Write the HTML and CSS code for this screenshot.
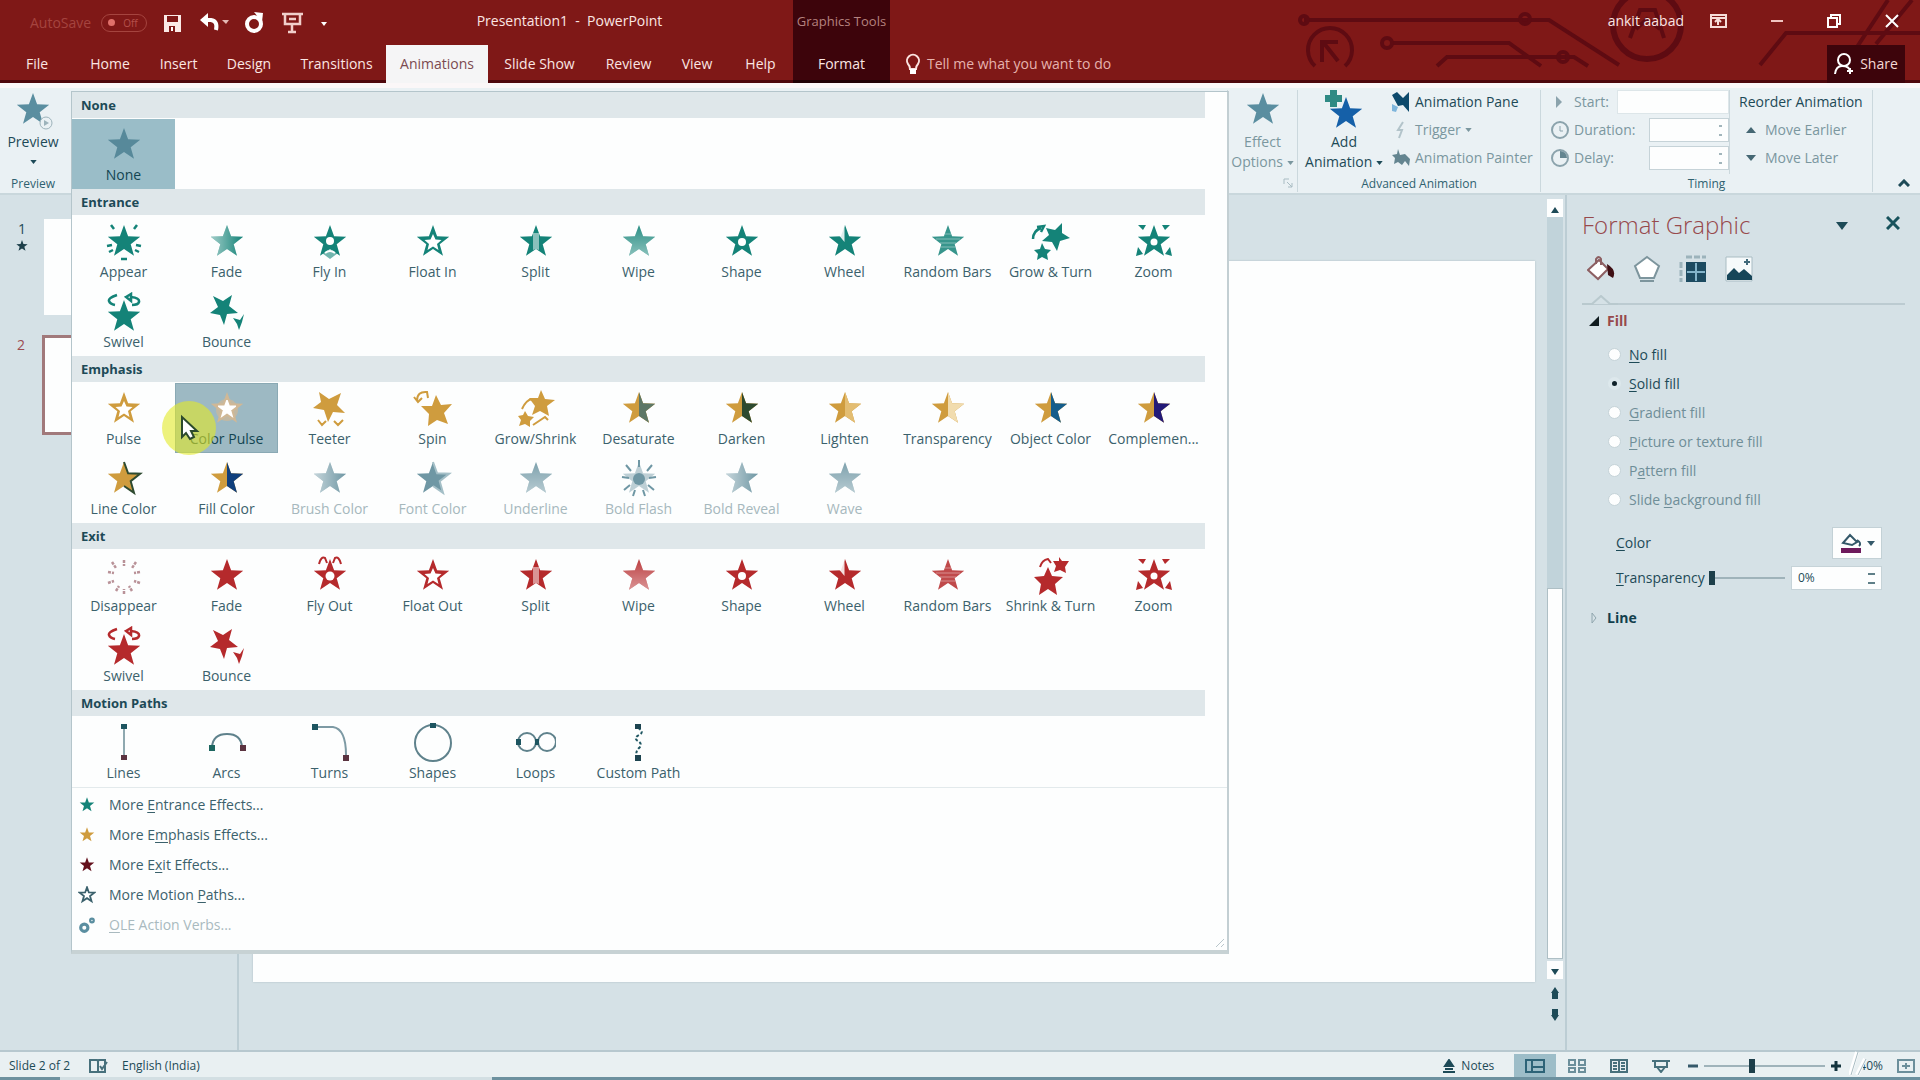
FILE: index.html
```html
<!DOCTYPE html>
<html lang="en">
<head>
<meta charset="utf-8">
<title>Presentation1 - PowerPoint</title>
<link rel="stylesheet" href="styles.css">
</head>
<body>
<svg class="defs" aria-hidden="true">
  <defs>
    <linearGradient id="fade-h"><stop offset="0" stop-color="#fff" stop-opacity=".6"/><stop offset="1" stop-color="#fff" stop-opacity="0"/></linearGradient>
    <linearGradient id="fade-v" x2="0" y2="1"><stop offset="0" stop-color="#fff" stop-opacity=".1"/><stop offset="1" stop-color="#fff" stop-opacity=".5"/></linearGradient>
    <path id="star" d="M20 3l4.100 11.300 12.100.400-9.500 7.500 3.300 11.600L20 27l-10 6.800 3.300-11.600-9.500-7.500 12.100-.400z"/>
    <path id="half" d="M20 3l4.100 11.300 12.100.400-9.500 7.500 3.300 11.600L20 27z"/>
    <symbol id="i-star" viewBox="0 0 40 40"><use href="#star" fill="currentColor"/></symbol>
    <symbol id="i-fade" viewBox="0 0 40 40"><use href="#star" fill="currentColor"/><use href="#star" fill="url(#fade-h)"/></symbol>
    <symbol id="i-wipe" viewBox="0 0 40 40"><use href="#star" fill="currentColor"/><use href="#star" fill="url(#fade-v)"/></symbol>
    <symbol id="i-half" viewBox="0 0 40 40"><use href="#star" fill="currentColor"/><use href="#half" class="half-fill"/></symbol>
    <symbol id="i-line" viewBox="0 0 40 40"><use href="#star" fill="currentColor"/><path d="M20 3l4.100 11.300 12.100.400-9.500 7.500 3.300 11.600L20 27" fill="none" class="half-line" stroke-width="2"/></symbol>
    <symbol id="i-hollow" viewBox="0 0 40 40"><use href="#star" fill="currentColor"/><path d="M20 12l2.500 5.500 6 .5-4.500 4 1.500 6L20 24.500 14.500 28l1.500-6-4.500-4 6-.5z" fill="#fff"/></symbol>
    <symbol id="i-shape" viewBox="0 0 40 40"><use href="#star" fill="currentColor"/><circle cx="20" cy="20" r="4" fill="#fff"/></symbol>
    <symbol id="i-flyin" viewBox="0 0 40 40"><use href="#star" fill="currentColor"/><circle cx="20" cy="19" r="4" fill="#fff"/><path d="M12 31q8-7 16 0l-8 6z" fill="currentColor" opacity=".6"/><path d="M15 31q5-4 10 0" stroke="#fff" stroke-width="2" fill="none"/></symbol>
    <symbol id="i-flyout" viewBox="0 0 40 40"><use href="#star" fill="currentColor"/><circle cx="20" cy="20" r="4.500" fill="#fff"/><path d="M9 8q2-8 6-6l2 5M31 8q-2-8-6-6l-2 5" stroke="currentColor" stroke-width="2" fill="none"/></symbol>
    <symbol id="i-split" viewBox="0 0 40 40"><use href="#star" fill="currentColor"/><path d="M17 11h6v17l-3-1-3 1z" fill="#fff" opacity=".5"/></symbol>
    <symbol id="i-wheel" viewBox="0 0 40 40"><use href="#star" fill="currentColor"/><path d="M19.500 3v17l-5-6 1-1z" fill="#fff" opacity=".85"/></symbol>
    <symbol id="i-bars" viewBox="0 0 40 40"><use href="#star" fill="currentColor" opacity=".85"/><path d="M8 17h24M12 21h16M13 25h14M17 12h6" stroke="#fff" stroke-width="1.500" opacity=".25"/></symbol>
    <symbol id="i-rays" viewBox="0 0 40 40"><use href="#star" fill="currentColor"/><path d="M7 3l3 4M33 3l-3 4M3 24l5-1M37 24l-5-1M5 30l4-2M35 30l-4-2M17 37h6" stroke="currentColor" stroke-width="2.500"/></symbol>
    <symbol id="i-burst" viewBox="0 0 40 40"><path d="M20 4v6M8 6l4 6M32 6l-4 6M4 16l6 1M36 16l-6 1M4 27l6-2M36 27l-6-2M12 35l3-5M28 35l-3-5M20 38v-5" stroke="currentColor" stroke-width="2.500" fill="none" stroke-dasharray="3 1"/></symbol>
    <symbol id="i-flash" viewBox="0 0 40 40"><use href="#star" fill="currentColor" opacity=".45"/><circle cx="20" cy="20" r="6" fill="currentColor"/><path d="M20 1v7M7 6l5 6M33 6l-5 6M3 18l7 1M37 18l-7 1M5 31l6-5M35 31l-6-5M14 37l2-6M26 37l-2-6" stroke="currentColor" stroke-width="2"/></symbol>
    <symbol id="i-swivel" viewBox="0 0 40 40"><use href="#star" fill="currentColor" y="5"/><path d="M13 3q-9 3-8 6 1 3 6 4M27 5q9 1 8 5-1 3-7 3M22 5l5-3v7z" stroke="currentColor" stroke-width="2.500" fill="none"/></symbol>
    <symbol id="i-bounce" viewBox="0 0 40 40"><path d="M6 4l10 5 9-6-3 11 9 7-11 1-3 11-4-10-10-2 8-6z" fill="currentColor"/><path d="M26 26l7 2 4-6-2 8-3 8-2-6z" fill="currentColor"/></symbol>
    <symbol id="i-grow" viewBox="0 0 40 40"><path d="M15 6l9 2 7-7 0 10 8 5-10 3-3 10-5-9-10-1 7-6z" fill="currentColor"/><path d="M11 21l3 6 6 1-4 4 1 6-6-3-5 3 1-6-4-4 6-1z" fill="currentColor"/><path d="M2 17q0-8 8-11M6 5l7-1-3 6" stroke="currentColor" stroke-width="2.500" fill="none"/></symbol>
    <symbol id="i-shrink" viewBox="0 0 40 40"><path d="M17 11l4 9 11 1-8 7 2 11-9-6-9 6 2-11-7-7 10-1z" fill="currentColor"/><path d="M28 1l3 4 7 0-4 6 1 6-6-3-6 2 2-6-3-5 6 0z" fill="currentColor"/><path d="M9 11q2-7 8-8l3 4" stroke="currentColor" stroke-width="2" fill="none"/></symbol>
    <symbol id="i-zoom" viewBox="0 0 40 40"><use href="#star" fill="currentColor"/><circle cx="20" cy="20" r="3.500" fill="#fff"/><path d="M4 3h8l-3 5zM36 3h-8l3 5zM2 34l2-9 5 7zM38 34l-2-9-5 7z" fill="currentColor"/></symbol>
    <symbol id="i-glow" viewBox="0 0 40 40"><use href="#star" fill="currentColor"/><circle cx="20" cy="21" r="11" fill="currentColor" opacity=".7"/><use href="#i-mini" x="11" y="11" width="18" height="18"/></symbol>
    <symbol id="i-mini" viewBox="0 0 40 40"><use href="#star" fill="#fff" stroke="#fff" stroke-width="5"/></symbol>
    <symbol id="i-teeter" viewBox="0 0 40 40"><path d="M9 3l10 7 12-6-4 12 8 8-12-1-5 10-4-12-11-2 8-6z" fill="currentColor"/><path d="M8 31l4 5 4-4M24 32l4 4 5-5" stroke="currentColor" stroke-width="2" fill="none"/></symbol>
    <symbol id="i-spin" viewBox="0 0 40 40"><path d="M23 6l5 10 11-1-8 9 4 11-11-4-9 6 1-12-8-8 11 0z" fill="currentColor"/><path d="M4 12q0-10 10-9l1 6M1 8l4 5 4-4" stroke="currentColor" stroke-width="2" fill="none"/></symbol>
    <symbol id="i-scale" viewBox="0 0 40 40"><path d="M25 1l4 9 10 1-8 6 2 10-9-5-8 4 3-9-6-8 9 0z" fill="currentColor"/><path d="M9 22l3 5 6 1-4 4 0 6-5-3-6 2 2-6-3-4 5-1z" fill="currentColor"/><path d="M6 20q4-9 10-10M17 36l12-8 3 3" fill="none" stroke="currentColor" stroke-width="2"/></symbol>
    <symbol id="i-lines" viewBox="0 0 40 40"><path d="M20 5v28" stroke="#8fa9b0" stroke-width="2"/><path d="M17 1h6v5h-6z" fill="#1d5560"/><path d="M17 32h6v5h-6z" fill="#5b3340"/></symbol>
    <symbol id="i-arcs" viewBox="0 0 40 40"><path d="M5 24q1-13 15-13t15 13" stroke="#5f828c" stroke-width="2" fill="none"/><path d="M2 22h6v6H2z" fill="#1d6660"/><path d="M33 22h6v6h-6z" fill="#5b3340"/></symbol>
    <symbol id="i-turns" viewBox="0 0 40 40"><path d="M5 4h18q13 2 13 28" stroke="#7d9aa4" stroke-width="2" fill="none"/><path d="M2 1h6v6H2z" fill="#1d5560"/><path d="M33 32h6v6h-6z" fill="#5b3340"/></symbol>
    <symbol id="i-shapes" viewBox="0 0 40 40"><circle cx="20" cy="20" r="18" stroke="#5f828c" stroke-width="2" fill="none"/><path d="M17 0h6v5h-6z" fill="#1d5560"/></symbol>
    <symbol id="i-loops" viewBox="0 0 40 40"><circle cx="11" cy="19" r="9" stroke="#5f828c" stroke-width="2" fill="none"/><circle cx="31" cy="19" r="9" stroke="#5f828c" stroke-width="2" fill="none"/><path d="M0 16h5v6H0zM19 16h4v6h-4z" fill="#1d5560"/></symbol>
    <symbol id="i-custom" viewBox="0 0 40 40"><path d="M19 5q7 4 1 7t-1 6 1 7-2 8" stroke="#1d5560" stroke-width="2" stroke-dasharray="3 2" fill="none"/><path d="M16 1h6v5h-6zM16 32h6v6h-6z" fill="#1d4450"/></symbol>
    <symbol id="i-outline" viewBox="0 0 40 40"><use href="#star" fill="#fff" stroke="currentColor" stroke-width="4"/></symbol>
    <symbol id="i-gears" viewBox="0 0 40 40"><circle cx="14" cy="26" r="8" stroke="currentColor" stroke-width="7" fill="none"/><circle cx="31" cy="10" r="4" stroke="currentColor" stroke-width="5" fill="none"/></symbol>
  </defs>
</svg>

<header class="app-header">
  <svg class="circuit" viewBox="0 0 640 83" width="640" height="83" aria-hidden="true">
    <g fill="none" stroke="#5e0b12" stroke-width="4">
      <path d="M24 20h245l70 45M111 43h118l32 23M157 66l10-9h127l14 9M480 65l26-32h134M575 50L608 0M596 44L632 0"/>
      <circle cx="24" cy="20" r="4"/><circle cx="245" cy="19" r="5"/><circle cx="107" cy="43" r="5"/><circle cx="283" cy="57" r="5"/>
      <path d="M35 66a22 22 0 1 1 30 0M42 62V42h16M43 42l15 19"/>
      <circle cx="367" cy="25" r="34" stroke-width="6"/><path d="M350 38l10-28h15l9 28M356 29l11-10 13 10"/>
    </g>
  </svg>
  <div class="title-row">
    <div class="quick">
      <span class="autosave">AutoSave</span>
      <button class="toggle" aria-label="AutoSave off"><i></i><span>Off</span></button>
      <button aria-label="Save"><svg width="22" height="22" viewBox="0 0 22 22"><path d="M2 3h17v17H2z" fill="#fbe9e6"/><path d="M5 4h11v6H5zM7 14h6v6H7z" fill="#7f1817"/><path d="M9 15h2v4H9z" fill="#fff"/></svg></button>
      <button aria-label="Undo"><svg width="30" height="22" viewBox="0 0 30 22"><path d="M3 8h9q7 1 5 10" fill="none" stroke="#fff" stroke-width="4"/><path d="M1 8l8-7v14z" fill="#fff"/><path d="M23 8h7l-3 4z" fill="#e3b9b4"/></svg></button>
      <button aria-label="Redo"><svg width="22" height="22" viewBox="0 0 22 22"><circle cx="10" cy="12" r="7" fill="none" stroke="#fff" stroke-width="4"/><path d="M10 0l9 1-1 9z" fill="#fff"/></svg></button>
      <button aria-label="Start from beginning"><svg width="24" height="22" viewBox="0 0 24 22"><path d="M1 2h21M4 3v9h15V3M11 12v7M7 20h8M8 7h7" stroke="#f1cfcb" stroke-width="2.500" fill="none"/></svg></button>
      <button aria-label="Customize quick access"><svg width="8" height="10" viewBox="0 0 8 10"><path d="M0 2h8M1 4h6L4 8z" fill="#fff"/></svg></button>
    </div>
    <div class="doc-title">Presentation1 &nbsp;-&nbsp; PowerPoint</div>
    <div class="context-title">Graphics Tools</div>
    <div class="window">
      <span>ankit aabad</span>
      <button aria-label="Ribbon display options"><svg width="18" height="16" viewBox="0 0 18 16"><path d="M1 2h15v12H1zM1 5h15M8 12V7M5 9l3-3 3 3" fill="none" stroke="#f6dcd9" stroke-width="2"/></svg></button>
      <button aria-label="Minimize"><svg width="14" height="16" viewBox="0 0 14 16"><path d="M1 8h12" stroke="#f0c4c0" stroke-width="2"/></svg></button>
      <button aria-label="Restore"><svg width="16" height="16" viewBox="0 0 16 16"><path d="M2 5h9v9H2zM5 4V2h9v9h-2" fill="none" stroke="#fff" stroke-width="2"/></svg></button>
      <button aria-label="Close"><svg width="16" height="16" viewBox="0 0 16 16"><path d="M2 2l12 12M14 2L2 14" stroke="#fff" stroke-width="2"/></svg></button>
    </div>
  </div>
  <nav class="tab-row">
    <a href="#file">File</a><a href="#home">Home</a><a href="#insert">Insert</a><a href="#design">Design</a><a href="#transitions">Transitions</a><a href="#animations" class="active">Animations</a><a href="#slideshow">Slide Show</a><a href="#review">Review</a><a href="#view">View</a><a href="#help">Help</a><a href="#format" class="context">Format</a>
    <button class="tell"><svg width="16" height="22" viewBox="0 0 16 22"><path d="M5 16q0-3-2-5a6 6 0 1 1 10 0q-2 2-2 5z" fill="none" stroke="#fbe3e0" stroke-width="2"/><path d="M5 16h6v5H5z" fill="#fff"/></svg>Tell me what you want to do</button>
    <button class="share"><svg width="20" height="24" viewBox="0 0 20 24"><circle cx="10" cy="8" r="6" fill="none" stroke="#fff" stroke-width="2"/><path d="M1 22q1-8 7-8 8 0 8 6M13 19h6M16 16v6" fill="none" stroke="#fff" stroke-width="2"/></svg>Share</button>
  </nav>
</header>

<section class="ribbon" aria-label="Animations ribbon">
  <div class="group preview">
    <button class="big"><svg class="icon steel" viewBox="0 0 40 40"><use href="#star" fill="currentColor"/><circle cx="33" cy="33" r="6" fill="#eaf1f4" stroke="#9db3bb" stroke-width="1"/><path d="M31 30l5 3-5 3z" fill="#9db3bb"/></svg>Preview<svg class="caret" viewBox="0 0 8 5"><path d="M0 0h8L4 5z"/></svg></button>
    <div class="group-name">Preview</div>
  </div>
  <div class="group gallery-slot"></div>
  <div class="group effect-options">
    <button class="big dim"><svg class="icon steel"><use href="#i-star"/></svg>Effect<span>Options <svg class="caret" viewBox="0 0 8 5"><path d="M0 0h8L4 5z"/></svg></span></button>
    <svg class="launcher" viewBox="0 0 10 10"><path d="M1 6V1h5M4 4l5 5M9 5v4H5" fill="none" stroke="#a9bcc3"/></svg>
  </div>
  <div class="group advanced">
    <div class="cols">
      <button class="big"><svg class="icon" viewBox="0 0 40 40"><use href="#star" fill="#1560a8" x="2" y="4"/><path d="M6 0h7v5h5v7h-5v5H6v-5H1V5h5z" fill="#2f8a84"/></svg>Add<span>Animation <svg class="caret" viewBox="0 0 8 5"><path d="M0 0h8L4 5z"/></svg></span></button>
      <div class="stack">
        <button><svg width="20" height="20" viewBox="0 0 20 20"><path d="M1 3l5-3 6 6 6-6v20l-6-7-5 1z" fill="#0d4a6c"/><path d="M1 12l6 3-2 5-4-1z" fill="#7fb6dc"/></svg>Animation Pane</button>
        <button class="dim"><svg width="20" height="20" viewBox="0 0 20 20"><path d="M12 2L7 10h4l-3 8" fill="none" stroke="#b3c4ca" stroke-width="2"/></svg>Trigger <svg class="caret" viewBox="0 0 8 5"><path d="M0 0h8L4 5z"/></svg></button>
        <button class="dim"><svg width="20" height="20" viewBox="0 0 20 20"><path d="M7 1l2 6 5-1 5 5-1 7-4-5-3 4-4-3-4 2 1-6-3-3 5-1z" fill="#648590"/></svg>Animation Painter</button>
      </div>
    </div>
    <div class="group-name">Advanced Animation</div>
  </div>
  <div class="group timing">
    <div class="cols">
      <div class="fields">
        <div class="field wide dim"><svg width="20" height="20" viewBox="0 0 20 20"><path d="M6 4l6 6-6 6z" fill="#8ba3ac"/></svg><label for="start">Start:</label><select id="start"><option></option></select></div>
        <div class="field dim"><svg width="20" height="20" viewBox="0 0 20 20"><circle cx="10" cy="10" r="8" fill="none" stroke="#8ba3ac" stroke-width="2"/><path d="M10 6v5h3" fill="none" stroke="#8ba3ac"/></svg><label for="duration">Duration:</label><span class="spin"><input id="duration" type="text"><i></i></span></div>
        <div class="field dim"><svg width="20" height="20" viewBox="0 0 20 20"><circle cx="10" cy="10" r="8" fill="none" stroke="#8ba3ac" stroke-width="2"/><path d="M10 3v7h7a7 7 0 0 0-7-7z" fill="#648590"/></svg><label for="delay">Delay:</label><span class="spin"><input id="delay" type="text"><i></i></span></div>
      </div>
      <div class="stack reorder">
        <div class="reorder-title">Reorder Animation</div>
        <button class="dim"><svg width="10" height="6" viewBox="0 0 10 6"><path d="M0 6h10L5 0z" fill="#456773"/></svg>Move Earlier</button>
        <button class="dim"><svg width="10" height="6" viewBox="0 0 10 6"><path d="M0 0h10L5 6z" fill="#456773"/></svg>Move Later</button>
      </div>
    </div>
    <div class="group-name">Timing</div>
  </div>
  <button class="collapse" aria-label="Collapse the ribbon"><svg width="12" height="8" viewBox="0 0 12 8"><path d="M1 7l5-5 5 5" fill="none" stroke="#1d4a57" stroke-width="3"/></svg></button>

  <div class="gallery">
    <h2>None</h2>
    <div class="effects">
      <button class="effect selected"><svg class="icon"><use href="#i-star"/></svg>None</button>
    </div>
    <h2>Entrance</h2>
    <div class="effects green">
      <button class="effect"><svg class="icon"><use href="#i-rays"/></svg>Appear</button>
      <button class="effect"><svg class="icon"><use href="#i-fade"/></svg>Fade</button>
      <button class="effect"><svg class="icon"><use href="#i-flyin"/></svg>Fly In</button>
      <button class="effect"><svg class="icon"><use href="#i-hollow"/></svg>Float In</button>
      <button class="effect"><svg class="icon"><use href="#i-split"/></svg>Split</button>
      <button class="effect"><svg class="icon"><use href="#i-wipe"/></svg>Wipe</button>
      <button class="effect"><svg class="icon"><use href="#i-shape"/></svg>Shape</button>
      <button class="effect"><svg class="icon"><use href="#i-wheel"/></svg>Wheel</button>
      <button class="effect"><svg class="icon"><use href="#i-bars"/></svg>Random Bars</button>
      <button class="effect"><svg class="icon"><use href="#i-grow"/></svg>Grow &amp; Turn</button>
      <button class="effect"><svg class="icon"><use href="#i-zoom"/></svg>Zoom</button>
      <button class="effect"><svg class="icon"><use href="#i-swivel"/></svg>Swivel</button>
      <button class="effect"><svg class="icon"><use href="#i-bounce"/></svg>Bounce</button>
    </div>
    <h2>Emphasis</h2>
    <div class="effects gold">
      <button class="effect"><svg class="icon"><use href="#i-hollow"/></svg>Pulse</button>
      <button class="effect hover"><svg class="icon"><use href="#i-glow"/></svg>Color Pulse
        <svg class="pointer" viewBox="0 0 56 56"><circle cx="28" cy="28" r="27" fill="#e2e926" fill-opacity=".6"/><path d="M21 17v20l4-4 4 6 4-2-3-6h6z" fill="#fff" stroke="#2c4a2c" stroke-width="2"/></svg></button>
      <button class="effect"><svg class="icon"><use href="#i-teeter"/></svg>Teeter</button>
      <button class="effect"><svg class="icon"><use href="#i-spin"/></svg>Spin</button>
      <button class="effect"><svg class="icon"><use href="#i-scale"/></svg>Grow/Shrink</button>
      <button class="effect"><svg class="icon to-gray"><use href="#i-half"/></svg>Desaturate</button>
      <button class="effect"><svg class="icon to-dark"><use href="#i-half"/></svg>Darken</button>
      <button class="effect"><svg class="icon to-light"><use href="#i-half"/></svg>Lighten</button>
      <button class="effect"><svg class="icon to-clear"><use href="#i-half"/></svg>Transparency</button>
      <button class="effect"><svg class="icon to-blue"><use href="#i-half"/></svg>Object Color</button>
      <button class="effect"><svg class="icon to-navy"><use href="#i-half"/></svg>Complemen...</button>
      <button class="effect"><svg class="icon to-dark"><use href="#i-line"/></svg>Line Color</button>
      <button class="effect"><svg class="icon to-deep"><use href="#i-half"/></svg>Fill Color</button>
      <button class="effect" disabled><svg class="icon"><use href="#i-fade"/></svg>Brush Color</button>
      <button class="effect" disabled><svg class="icon to-pale"><use href="#i-line"/></svg>Font Color</button>
      <button class="effect" disabled><svg class="icon"><use href="#i-wipe"/></svg>Underline</button>
      <button class="effect" disabled><svg class="icon"><use href="#i-flash"/></svg>Bold Flash</button>
      <button class="effect" disabled><svg class="icon"><use href="#i-fade"/></svg>Bold Reveal</button>
      <button class="effect" disabled><svg class="icon"><use href="#i-wipe"/></svg>Wave</button>
    </div>
    <h2>Exit</h2>
    <div class="effects red">
      <button class="effect"><svg class="icon burst"><use href="#i-burst"/></svg>Disappear</button>
      <button class="effect"><svg class="icon"><use href="#i-star"/></svg>Fade</button>
      <button class="effect"><svg class="icon"><use href="#i-flyout"/></svg>Fly Out</button>
      <button class="effect"><svg class="icon"><use href="#i-hollow"/></svg>Float Out</button>
      <button class="effect"><svg class="icon"><use href="#i-split"/></svg>Split</button>
      <button class="effect"><svg class="icon"><use href="#i-wipe"/></svg>Wipe</button>
      <button class="effect"><svg class="icon"><use href="#i-shape"/></svg>Shape</button>
      <button class="effect"><svg class="icon"><use href="#i-wheel"/></svg>Wheel</button>
      <button class="effect"><svg class="icon"><use href="#i-bars"/></svg>Random Bars</button>
      <button class="effect"><svg class="icon"><use href="#i-shrink"/></svg>Shrink &amp; Turn</button>
      <button class="effect"><svg class="icon"><use href="#i-zoom"/></svg>Zoom</button>
      <button class="effect"><svg class="icon"><use href="#i-swivel"/></svg>Swivel</button>
      <button class="effect"><svg class="icon"><use href="#i-bounce"/></svg>Bounce</button>
    </div>
    <h2>Motion Paths</h2>
    <div class="effects">
      <button class="effect"><svg class="icon"><use href="#i-lines"/></svg>Lines</button>
      <button class="effect"><svg class="icon"><use href="#i-arcs"/></svg>Arcs</button>
      <button class="effect"><svg class="icon"><use href="#i-turns"/></svg>Turns</button>
      <button class="effect"><svg class="icon"><use href="#i-shapes"/></svg>Shapes</button>
      <button class="effect"><svg class="icon"><use href="#i-loops"/></svg>Loops</button>
      <button class="effect"><svg class="icon"><use href="#i-custom"/></svg>Custom Path</button>
    </div>
    <div class="more">
      <button><svg class="green"><use href="#i-star"/></svg><span>More <u>E</u>ntrance Effects...</span></button>
      <button><svg class="gold"><use href="#i-star"/></svg><span>More E<u>m</u>phasis Effects...</span></button>
      <button><svg class="maroon"><use href="#i-star"/></svg><span>More E<u>x</u>it Effects...</span></button>
      <button><svg><use href="#i-outline"/></svg><span>More Motion <u>P</u>aths...</span></button>
      <button disabled><svg class="steel"><use href="#i-gears"/></svg><span><u>O</u>LE Action Verbs...</span></button>
    </div>
    <svg class="grip" viewBox="0 0 10 10"><path d="M1 9l8-8M6 9l3-3" stroke="#b9c6cb"/></svg>
  </div>
</section>

<main class="workspace">
  <aside class="thumbs">
    <div class="thumb"><div class="num">1<svg viewBox="0 0 40 40"><use href="#star"/></svg></div><div class="slide-mini"></div></div>
    <div class="thumb current"><div class="num">2</div><div class="slide-mini"></div></div>
  </aside>
  <section class="canvas"><div class="slide"></div></section>
  <div class="scroll">
    <button class="end" aria-label="Scroll up"><svg width="8" height="6" viewBox="0 0 8 6"><path d="M0 6h8L4 0z"/></svg></button>
    <div class="track"><div class="grab"></div></div>
    <button class="end down" aria-label="Scroll down"><svg width="8" height="6" viewBox="0 0 8 6"><path d="M0 0h8L4 6z"/></svg></button>
    <button aria-label="Previous slide"><svg width="8" height="12" viewBox="0 0 8 12"><path d="M0 6l4-6 4 6zM1 6h6v6H1z"/></svg></button>
    <button aria-label="Next slide"><svg width="8" height="12" viewBox="0 0 8 12"><path d="M1 0h6v6H1zM0 6h8l-4 6z"/></svg></button>
  </div>
  <aside class="pane">
    <div class="pane-head"><h1>Format Graphic</h1>
      <button aria-label="Pane options"><svg width="12" height="8" viewBox="0 0 12 8"><path d="M0 0h12L6 8z" fill="#1d4a57"/></svg></button>
      <button aria-label="Close pane"><svg width="14" height="14" viewBox="0 0 14 14"><path d="M1 1l12 12M13 1L1 13" stroke="#17525c" stroke-width="3"/></svg></button></div>
    <div class="pane-tabs">
      <button aria-label="Fill and line"><svg viewBox="0 0 28 28"><path d="M1 15L12 5l9 9-10 10z" fill="#fff" stroke="#8d5f62" stroke-width="2"/><path d="M9 9V4q3-4 5 0v6" fill="none" stroke="#8d5f62" stroke-width="2"/><path d="M20 9q10 6 6 14l-5-3z" fill="#3f0f14"/></svg></button>
      <button aria-label="Effects"><svg viewBox="0 0 28 28"><path d="M14 2l12 9-5 12H7L2 11z" fill="#fff" stroke="#7d959d" stroke-width="2"/><path d="M7 26h14" stroke="#7d959d" stroke-width="2"/></svg></button>
      <button aria-label="Size and properties"><svg viewBox="0 0 28 28"><path d="M7 7h20v20H7z" fill="#1c4a60"/><path d="M17 8v18M8 17h18" stroke="#83b3c9" stroke-width="2"/><path d="M7 2h20M2 7v20" stroke="#9cb3bb" stroke-width="3" stroke-dasharray="6 2"/></svg></button>
      <button aria-label="Picture"><svg viewBox="0 0 28 28"><path d="M1 2h26v24H1z" fill="#f6fafb" stroke="#a9bcc3"/><path d="M2 25v-5l7-7 5 5 5-4 8 7v4z" fill="#174659"/><path d="M22 4v6M19 7h6" stroke="#40697a" stroke-width="2"/></svg></button>
    </div>
    <svg class="notch" viewBox="0 0 36 10"><path d="M0 9h10l9-8 9 8h8" fill="#d5e1e6" stroke="#b9c9ce" stroke-width="2"/></svg>
    <h3 class="open"><svg width="12" height="12" viewBox="0 0 12 12"><path d="M11 1v10H1z" fill="#111c20"/></svg>Fill</h3>
    <div class="radios">
      <label><input type="radio" name="fill"><span><u>N</u>o fill</span></label>
      <label><input type="radio" name="fill" checked><span><u>S</u>olid fill</span></label>
      <label class="dim"><input type="radio" name="fill"><span><u>G</u>radient fill</span></label>
      <label class="dim"><input type="radio" name="fill"><span><u>P</u>icture or texture fill</span></label>
      <label class="dim"><input type="radio" name="fill"><span>P<u>a</u>ttern fill</span></label>
      <label class="dim"><input type="radio" name="fill"><span>Slide <u>b</u>ackground fill</span></label>
    </div>
    <div class="prop"><span><u>C</u>olor</span><button class="color" aria-label="Color"><svg width="38" height="24" viewBox="0 0 38 24"><path d="M5 12l7-8 7 7-5 3zM19 9q5 3 2 6" fill="#fff" stroke="#35596a" stroke-width="2"/><path d="M3 17h20v5H3z" fill="#6d1a5c"/><path d="M29 10h8l-4 5z" fill="#35596a"/></svg></button></div>
    <div class="prop"><label for="alpha"><u>T</u>ransparency</label><input id="alpha" type="range" min="0" max="100" value="0"><span class="spin"><input type="text" value="0%" aria-label="Transparency percent"><i></i></span></div>
    <h3><svg width="12" height="12" viewBox="0 0 12 12"><path d="M4 1l4 5-4 5z" fill="none" stroke="#90a6ae"/></svg>Line</h3>
  </aside>
</main>

<footer class="status">
  <span>Slide 2 of 2</span>
  <svg width="20" height="16" viewBox="0 0 20 16"><path d="M2 2h7l1 1 1-1h6v12H2zM10 3v11M12 8l2 3 5-7" fill="none" stroke="#47707c" stroke-width="2"/></svg>
  <span class="lang">English (India)</span>
  <button class="notes"><svg width="14" height="14" viewBox="0 0 14 14"><path d="M1 13h12M3 10h8M7 1l4 6H3z" fill="#1d4a57" stroke="#1d4a57" stroke-width="2"/></svg>Notes</button>
  <button class="view on" aria-label="Normal"><svg width="20" height="14" viewBox="0 0 20 14"><path d="M1 1h18v12H1zM7 1v12M7 8h12" fill="none" stroke="#2d6377" stroke-width="2"/></svg></button>
  <button class="view" aria-label="Slide sorter"><svg width="18" height="14" viewBox="0 0 18 14"><path d="M1 1h6v5H1zM11 1h6v5h-6zM1 9h6v4H1zM11 9h6v4h-6z" fill="none" stroke="#6c8f9b" stroke-width="2"/></svg></button>
  <button class="view" aria-label="Reading view"><svg width="18" height="14" viewBox="0 0 18 14"><path d="M1 1h16v12H1zM9 1v12M3 4h4M3 7h4M3 10h4M11 4h4M11 7h4M11 10h4" fill="none" stroke="#47707c" stroke-width="2"/></svg></button>
  <button class="view" aria-label="Slide show"><svg width="18" height="14" viewBox="0 0 18 14"><path d="M0 2h18M3 2v6h12V2M5 8l4 5 4-5" fill="none" stroke="#47707c" stroke-width="2"/></svg></button>
  <button class="step" aria-label="Zoom out"><svg width="10" height="10" viewBox="0 0 10 10"><path d="M0 5h10" stroke="#35596a" stroke-width="3"/></svg></button>
  <input type="range" class="zoom" min="0" max="100" value="39" aria-label="Zoom">
  <button class="step" aria-label="Zoom in"><svg width="10" height="10" viewBox="0 0 10 10"><path d="M0 5h10M5 0v10" stroke="#14343e" stroke-width="3"/></svg></button>
  <span class="percent"><svg class="mark" viewBox="0 0 20 26"><path d="M8 1L1 24M16 8L8 24" fill="none" stroke="#fff" stroke-width="4"/><path d="M9 1L2 24M17 8L9 24" fill="none" stroke="#a9bcc2" stroke-width="1"/></svg>40%</span>
  <button class="fit" aria-label="Fit slide to window"><svg width="18" height="14" viewBox="0 0 18 14"><path d="M1 1h16v12H1zM5 7h8M9 4v6" fill="none" stroke="#6c8f9b" stroke-width="2"/></svg></button>
</footer>
<div class="taskbar"></div>
</body>
</html>
```
FILE: styles.css
```css
* { box-sizing: border-box; }
body {
  margin: 0;
  min-height: 100vh;
  display: flex;
  flex-direction: column;
  background: #d5e1e6;
  color: #1d4a57;
  font: 14px/20px "Open Sans", "Noto Sans", sans-serif;
}
button { border: 0; background: none; padding: 0; margin: 0; font: inherit; color: inherit; }
a { color: inherit; text-decoration: none; }
h1, h2, h3 { margin: 0; }
u { text-underline-offset: 2px; }
.defs { position: absolute; width: 0; height: 0; }
.icon { width: 40px; height: 40px; display: block; flex: none; overflow: visible; }
.caret { width: 7px; height: 4px; fill: currentColor; vertical-align: middle; }
.dim { color: #7b979f; }
.steel { color: #5a8ea0; }
.green { color: #148378; }
.gold { color: #cf9c3e; }
.red { color: #b52a2c; }
.maroon { color: #64101c; }

/* header */
.app-header { position: relative; background: #7f1817; color: #fbe6e3; border-bottom: 3px solid #4e070c; }
.circuit { position: absolute; top: 0; right: 0; }
.title-row { position: relative; display: grid; grid-template-columns: 346px 447px 97px 1fr; height: 45px; align-items: stretch; }
.quick { display: flex; align-items: center; padding-left: 30px; gap: 15px; }
.quick svg { display: block; }
.autosave { color: #a5443f; margin-right: -5px; }
.toggle { display: flex; align-items: center; gap: 8px; width: 46px; height: 18px; border: 1px solid #a5443f; border-radius: 9px; padding-left: 6px; font-size: 10px; color: #b5504b; }
.toggle i { width: 7px; height: 7px; border-radius: 50%; background: #e0706a; }
.doc-title, .context-title { display: flex; align-items: center; justify-content: center; padding-bottom: 3px; }
.context-title { background: #3d040b; color: #b5827f; font-size: 13px; white-space: nowrap; }
.window { display: flex; align-items: center; justify-content: flex-end; gap: 42px; padding: 0 20px 3px; }
.window svg { display: block; }
.window span { margin-right: -16px; }
.tab-row { position: relative; display: grid; grid-template-columns: 74px 72px 65px 76px 99px 102px 103px 75px 62px 65px 97px 1fr 78px; height: 38px; margin-bottom: -3px; padding-right: 15px; }
.tab-row a { display: flex; align-items: center; justify-content: center; box-shadow: inset 0 -3px #4e070c; }
.tab-row .active { background: #f5f5f6; color: #7c4a50; box-shadow: none; }
.tab-row .context { background: #3d040b; box-shadow: inset 0 -3px #1f0004; }
.tell, .share { display: flex; align-items: center; gap: 6px; }
.tell { padding-left: 15px; color: #e6b3ae; }
.share { background: #3d040b; justify-content: center; color: #f5d9d6; }

/* ribbon */
.ribbon { position: relative; display: flex; height: 112px; padding: 2px 0 1px; background: #eaf1f4; border-top: 5px solid #fbf7f8; border-bottom: 2px solid #c9d7dc; z-index: 2; }
.group { display: flex; flex-direction: column; justify-content: space-between; border-right: 1px solid #cbd8dd; position: relative; }
.group-name { text-align: center; font-size: 12px; line-height: 16px; color: #2f6170; }
.big { display: flex; flex-direction: column; align-items: center; white-space: nowrap; line-height: 20px; }
.big .icon { margin-bottom: 2px; }
.preview { width: 66px; border: 0; }
.preview .caret { margin-top: 8px; }
.gallery-slot { flex: 1; }
.effect-options { width: 70px; }
.launcher { position: absolute; right: 4px; bottom: 4px; width: 10px; height: 10px; }
.cols { display: flex; }
.advanced { width: 243px; }
.advanced .big { width: 92px; }
.stack { display: flex; flex-direction: column; }
.stack button, .reorder-title { display: flex; align-items: center; height: 28px; gap: 4px; white-space: nowrap; margin-top: -2px; margin-bottom: 2px; }
.advanced .stack svg:first-child { flex: none; margin-left: 1px; }
.timing { width: 332px; }
.fields { width: 189px; border-right: 1px solid #cbd8dd; padding-left: 9px; }
.field { display: flex; align-items: center; height: 28px; gap: 4px; margin-top: -2px; margin-bottom: 2px; }
.field label { flex: 1; }
.field select { width: 112px; height: 24px; border: 1px solid #dde6e9; background: #fdfefe; appearance: none; flex: none; }
.spin { display: flex; align-items: center; width: 80px; height: 24px; border: 1px solid #c6d3d8; background: #fdfefe; padding-right: 6px; flex: none; }
.spin input { flex: 1; min-width: 0; border: 0; padding: 0 0 0 6px; background: none; font: inherit; font-size: 12px; color: inherit; }
.spin i { width: 7px; height: 14px; background: linear-gradient(currentColor, currentColor) 0 2px / 7px 2px no-repeat, linear-gradient(currentColor, currentColor) 0 11px / 7px 2px no-repeat; opacity: .7; }
.field .spin i { width: 3px; }
.reorder { padding-left: 9px; }
.reorder button { padding-left: 7px; gap: 9px; }
.collapse { padding: 0 10px 5px 25px; align-self: flex-end; line-height: 8px; }

/* gallery drop-down */
.gallery { position: absolute; left: 71px; top: 3px; width: 1158px; height: 863px; background: #fdfefe; border: 1px solid #b4c5cb; border-bottom: 4px solid #c7d2d4; border-right: 2px solid #c3cfd3; }
.gallery h2 { width: 1133px; height: 26px; margin-bottom: 1px; background: #dfe7ea; font-size: 13px; line-height: 26px; font-weight: 700; padding-left: 9px; }
.effects { display: grid; grid-template-columns: repeat(11, 103px); grid-auto-rows: 70px; }
.effect { position: relative; display: flex; flex-direction: column; align-items: center; padding: 6px 0 4px; white-space: nowrap; line-height: 20px; color: #3b616c; }
.effect .icon { color: #57899a; }
.green .icon { color: #148378; }
.gold .icon { color: #cf9c3e; }
.red .icon { color: #b52a2c; }
.red .burst { color: #b99298; }
.effect.selected { background: #9abdc8; color: #124552; }
.effect.hover { background: #9db9c3; color: #124552; outline: 1px solid #8aa9b4; outline-offset: -1px; }
.effect.hover .icon { color: #d0b896; }
.effect:disabled { color: #a6b8bd; }
.effect:disabled .icon { color: #6f97a4; }
.half-fill { fill: var(--half); }
.half-line { stroke: var(--half); }
.to-gray { --half: #5d7766; }
.to-dark { --half: #2d4a30; }
.to-light { --half: #e3bd72; }
.to-clear { --half: #f1dcae; }
.to-blue { --half: #145d8c; }
.to-navy { --half: #231a78; }
.to-deep { --half: #0f3f7d; }
.to-pale { --half: #a4bfc7; }
.pointer { position: absolute; left: -14px; top: 17px; width: 56px; height: 56px; }
.more { border-top: 1px solid #e3eaec; padding-top: 2px; }
.more button { display: flex; align-items: center; gap: 13px; height: 30px; padding-left: 6px; color: #3b616c; }
.more button:disabled { color: #a9babf; }
.more svg { width: 18px; height: 18px; flex: none; }
.grip { position: absolute; right: 2px; bottom: 2px; width: 10px; height: 10px; }

/* workspace */
.workspace { flex: 1; display: grid; grid-template-columns: 239px 1fr 30px 353px; border-bottom: 2px solid #b7c8cf; }
.thumbs { border-right: 2px solid #bccdd4; padding-top: 24px; display: flex; flex-direction: column; gap: 20px; }
.thumb { display: flex; height: 96px; padding-right: 20px; }
.num { width: 44px; text-align: center; }
.num svg { display: block; width: 14px; height: 14px; margin: 0 auto; fill: #1d3f4a; }
.slide-mini { flex: 1; background: #fdfefe; }
.current { height: 100px; }
.current .num { width: 42px; color: #9c4c50; }
.current .slide-mini { border: 3px solid #a1797b; }
.canvas { padding: 66px 2px 68px 14px; display: flex; }
.slide { flex: 1; background: #fdfefe; box-shadow: 0 0 2px #aebfc5; }
.scroll { display: flex; flex-direction: column; padding: 4px 2px 24px 10px; border-right: 2px solid #bccdd4; }
.scroll button { height: 22px; line-height: 8px; fill: #1d4a57; }
.scroll .end { height: 18px; background: #fdfefe; }
.scroll .down { margin-bottom: 3px; }
.track { flex: 1; display: flex; flex-direction: column; justify-content: flex-end; background: #c1d3da; margin-bottom: 2px; }
.grab { height: 50%; background: #fdfefe; border: 1px solid #aebfc5; }

/* format pane */
.pane { padding: 0 15px; }
.pane .dim { color: #6f8e98; }
.pane-head { display: flex; align-items: center; height: 60px; gap: 38px; padding-right: 5px; }
.pane-head h1 { flex: 1; font-size: 24px; line-height: 32px; font-weight: 300; color: #97494c; }
.pane-tabs { display: flex; gap: 18px; height: 40px; padding-left: 5px; }
.pane-tabs svg { width: 28px; height: 28px; display: block; }
.pane-tabs button { height: 28px; }
.notch { display: block; width: 36px; height: 10px; }
.pane h3 { display: flex; align-items: center; gap: 7px; height: 34px; font-size: 14px; padding-left: 6px; }
.pane .open { color: #97494c; border-top: 2px solid #bccbd1; margin-top: -2px; }
.radios { padding: 3px 0 0 26px; }
.radios label { display: flex; align-items: center; gap: 8px; height: 29px; }
.radios input { appearance: none; width: 13px; height: 13px; margin: 0; border-radius: 50%; background: #fdfefe; border: 1px solid #c5d3d8; }
.radios input:checked { border: 4px solid #dde8ec; background: #10222a; }
.prop { display: flex; align-items: center; height: 35px; padding: 0 23px 0 34px; }
.radios + .prop { margin-top: 11px; }
.prop > :first-child { flex: none; }
.color { width: 50px; height: 32px; margin-left: auto; background: #fdfefe; border: 1px solid #c3d1d6; display: flex; align-items: center; justify-content: center; }
input[type="range"] { appearance: none; height: 18px; background: linear-gradient(#9fb3ba, #9fb3ba) center / 100% 2px no-repeat; margin: 0; }
input[type="range"]::-webkit-slider-thumb { appearance: none; width: 6px; height: 14px; background: #1d3f4a; }
#alpha { flex: 1; min-width: 0; margin: 0 6px 0 4px; }
.prop .spin { width: 91px; }
.prop + h3 { margin-top: 6px; color: #123f4d; }

/* status bar */
.status { display: flex; align-items: center; height: 25px; background: #e9f0f2; font-size: 12px; padding: 2px 5px 0 9px; }
.status svg { display: block; }
.status > svg { margin: 0 14px 0 18px; }
.notes { display: flex; align-items: center; gap: 5px; margin-left: auto; margin-right: 20px; }
.view { width: 42px; height: 23px; display: flex; align-items: center; justify-content: center; }
.view.on { background: #9dbdc8; }
.step { padding: 0 6px; }
.zoom { width: 121px; }
.percent { position: relative; margin: 0 14px 0 12px; }
.percent .mark { position: absolute; left: -10px; bottom: -1px; width: 20px; height: 26px; }
.taskbar { height: 3px; background: linear-gradient(90deg, #6d919f 60px, #d3dfe3 60px 492px, #6d919f 492px); }
```
